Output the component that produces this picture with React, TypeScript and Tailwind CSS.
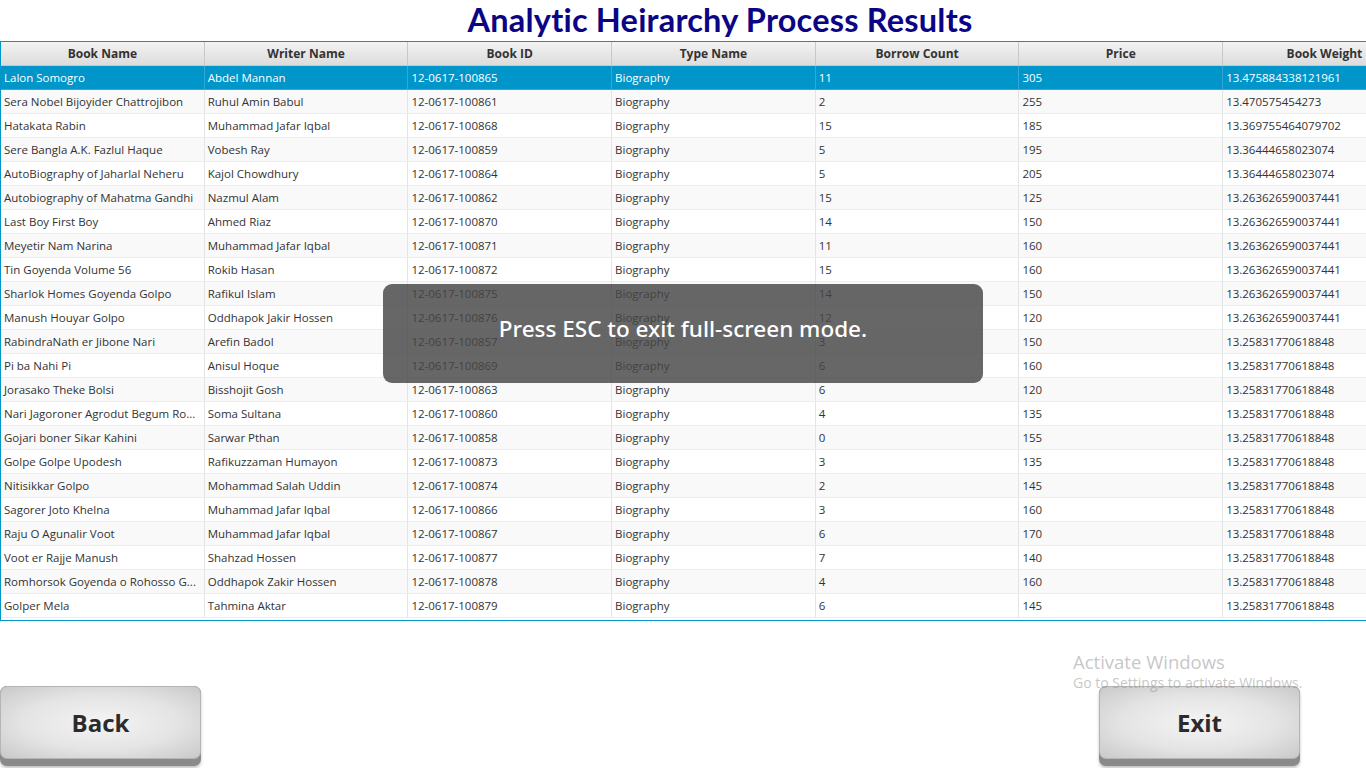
import React from 'react'

const COLUMNS = ['Book Name', 'Writer Name', 'Book ID', 'Type Name', 'Borrow Count', 'Price', 'Book Weight']

const ROWS: string[][] = [
  ['Lalon Somogro', 'Abdel Mannan', '12-0617-100865', 'Biography', '11', '305', '13.475884338121961'],
  ['Sera Nobel Bijoyider Chattrojibon', 'Ruhul Amin Babul', '12-0617-100861', 'Biography', '2', '255', '13.470575454273'],
  ['Hatakata Rabin', 'Muhammad Jafar Iqbal', '12-0617-100868', 'Biography', '15', '185', '13.369755464079702'],
  ['Sere Bangla A.K. Fazlul Haque', 'Vobesh Ray', '12-0617-100859', 'Biography', '5', '195', '13.36444658023074'],
  ['AutoBiography of Jaharlal Neheru', 'Kajol Chowdhury', '12-0617-100864', 'Biography', '5', '205', '13.36444658023074'],
  ['Autobiography of Mahatma Gandhi', 'Nazmul Alam', '12-0617-100862', 'Biography', '15', '125', '13.263626590037441'],
  ['Last Boy First Boy', 'Ahmed Riaz', '12-0617-100870', 'Biography', '14', '150', '13.263626590037441'],
  ['Meyetir Nam Narina', 'Muhammad Jafar Iqbal', '12-0617-100871', 'Biography', '11', '160', '13.263626590037441'],
  ['Tin Goyenda Volume 56', 'Rokib Hasan', '12-0617-100872', 'Biography', '15', '160', '13.263626590037441'],
  ['Sharlok Homes Goyenda Golpo', 'Rafikul Islam', '12-0617-100875', 'Biography', '14', '150', '13.263626590037441'],
  ['Manush Houyar Golpo', 'Oddhapok Jakir Hossen', '12-0617-100876', 'Biography', '12', '120', '13.263626590037441'],
  ['RabindraNath er Jibone Nari', 'Arefin Badol', '12-0617-100857', 'Biography', '3', '150', '13.25831770618848'],
  ['Pi ba Nahi Pi', 'Anisul Hoque', '12-0617-100869', 'Biography', '6', '160', '13.25831770618848'],
  ['Jorasako Theke Bolsi', 'Bisshojit Gosh', '12-0617-100863', 'Biography', '6', '120', '13.25831770618848'],
  ['Nari Jagoroner Agrodut Begum Ro...', 'Soma Sultana', '12-0617-100860', 'Biography', '4', '135', '13.25831770618848'],
  ['Gojari boner Sikar Kahini', 'Sarwar Pthan', '12-0617-100858', 'Biography', '0', '155', '13.25831770618848'],
  ['Golpe Golpe Upodesh', 'Rafikuzzaman Humayon', '12-0617-100873', 'Biography', '3', '135', '13.25831770618848'],
  ['Nitisikkar Golpo', 'Mohammad Salah Uddin', '12-0617-100874', 'Biography', '2', '145', '13.25831770618848'],
  ['Sagorer Joto Khelna', 'Muhammad Jafar Iqbal', '12-0617-100866', 'Biography', '3', '160', '13.25831770618848'],
  ['Raju O Agunalir Voot', 'Muhammad Jafar Iqbal', '12-0617-100867', 'Biography', '6', '170', '13.25831770618848'],
  ['Voot er Rajje Manush', 'Shahzad Hossen', '12-0617-100877', 'Biography', '7', '140', '13.25831770618848'],
  ['Romhorsok Goyenda o Rohosso G...', 'Oddhapok Zakir Hossen', '12-0617-100878', 'Biography', '4', '160', '13.25831770618848'],
  ['Golper Mela', 'Tahmina Aktar', '12-0617-100879', 'Biography', '6', '145', '13.25831770618848'],
]

function FxButton({ label }: { label: string }) {
  return (
    <button className="relative w-[201px] h-[80px] rounded-[7px] bg-[#8a8a8a] pb-[7px] shadow-[0_2px_3px_rgba(0,0,0,0.25)]">
      <span className="flex h-full w-full items-center justify-center rounded-[7px] border border-[#b5b5b5] bg-[radial-gradient(ellipse_at_center,#f4f4f4_0%,#e4e4e4_55%,#c9c9ca_100%)] text-[24px] font-bold text-[#2b2b2b]">
        {label}
      </span>
    </button>
  )
}

export default function App() {
  return (
    <div
      className="relative w-[1366px] h-[768px] overflow-hidden bg-white"
      style={{ fontFamily: '"Open Sans", "Noto Sans", sans-serif' }}
    >
      <div className="flex h-[41px] items-center justify-center pl-[74px]">
        <h1
          className="text-[32.5px] font-bold leading-none text-[#0b0585] tracking-[0.2px]"
          style={{ fontFamily: 'Lato, "Open Sans", sans-serif' }}
        >
          Analytic Heirarchy Process Results
        </h1>
      </div>

      {/* table */}
      <div className="h-[580px] overflow-hidden border-t border-l border-b border-[#0096c9]">
        <div className="w-[1426px]">
          <div className="flex h-[24px] border-b border-[#c8c8c8] bg-gradient-to-b from-[#f3f3f3] to-[#dcdcdc]">
            {COLUMNS.map(c => (
              <div
                key={c}
                className="flex w-[203.7px] shrink-0 items-center justify-center border-r border-[#c8c8c8] text-[12px] font-bold text-[#333]"
              >
                {c}
              </div>
            ))}
          </div>
          {ROWS.map((r, i) => {
            const sel = i === 0
            return (
              <div
                key={i}
                className={`flex h-[24px] ${sel ? 'bg-[#0096c9] text-white' : i % 2 === 1 ? 'bg-[#f9f9f9] text-[#333]' : 'bg-white text-[#333]'} ${sel ? 'border-b border-[#33a8d4]' : 'border-b border-[#ededed]'}`}
              >
                {r.map((v, j) => (
                  <div
                    key={j}
                    className={`flex w-[203.7px] shrink-0 items-center overflow-hidden whitespace-nowrap px-[3px] text-[11.5px] ${sel ? 'border-r border-[#33a8d4]' : 'border-r border-[#e4e4e4]'}`}
                  >
                    {v}
                  </div>
                ))}
              </div>
            )
          })}
        </div>
      </div>

      {/* bottom buttons */}
      <div className="mt-[65px] flex justify-between pr-[66px]">
        <FxButton label="Back" />
        <FxButton label="Exit" />
      </div>

      {/* full-screen toast */}
      <div className="absolute left-[383px] top-[284px] flex h-[99px] w-[600px] items-center justify-center rounded-[9px] bg-[rgba(70,70,70,0.82)] pb-[9px]">
        <span className="text-[22.5px] font-medium text-white" style={{ fontFamily: '"Noto Sans", "Open Sans", sans-serif' }}>
          Press ESC to exit full-screen mode.
        </span>
      </div>

      {/* windows watermark */}
      <div className="pointer-events-none absolute left-[1073px] top-[650px] text-[rgba(150,150,150,0.55)]" style={{ fontFamily: '"Open Sans", sans-serif' }}>
        <div className="text-[18.5px] leading-[24px]">Activate Windows</div>
        <div className="text-[14px] leading-[18px]">Go to Settings to activate Windows.</div>
      </div>
    </div>
  )
}
